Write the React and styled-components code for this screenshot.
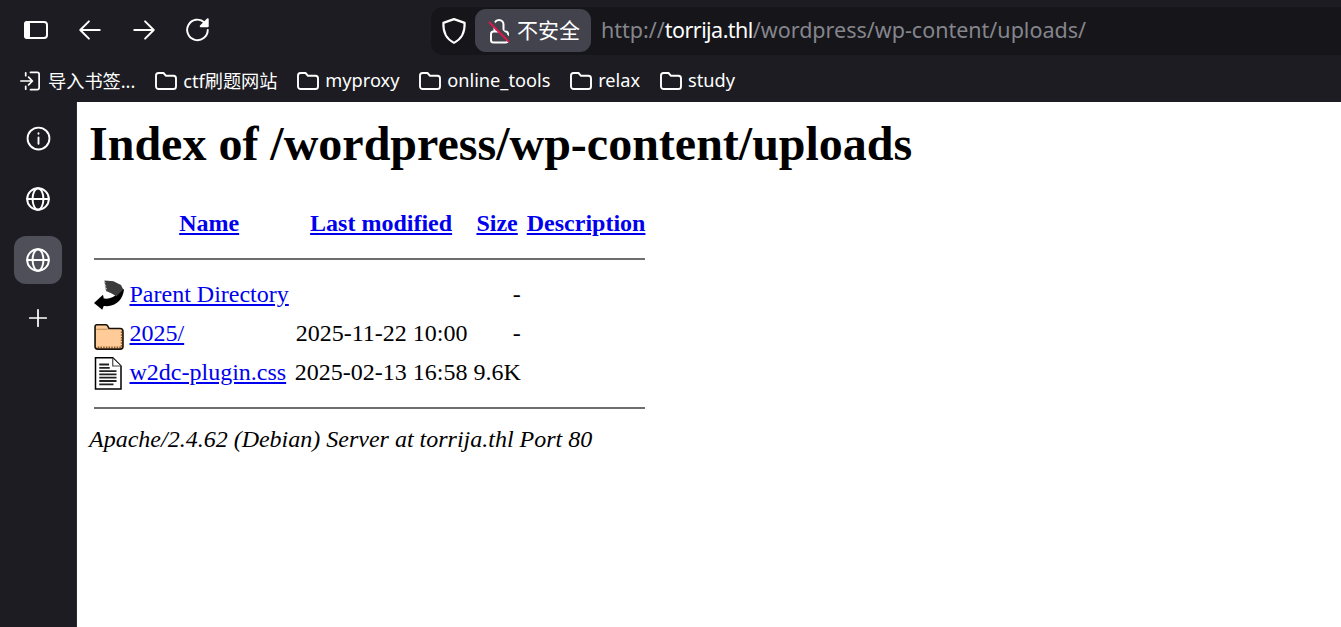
import React from "react";
import styled, { createGlobalStyle } from "styled-components";

const Global = createGlobalStyle`
  html, body { margin: 0; padding: 0; height: 100%; overflow: hidden; }
  #root { height: 100%; }
`;

const Shell = styled.div`
  display: flex;
  flex-direction: column;
  width: 1341px;
  height: 627px;
  background: #1c1c22;
  overflow: hidden;
`;
const Toolbar = styled.div`
  display: flex;
  align-items: center;
  height: 60px;
  flex: none;
`;
const NavGroup = styled.div`
  display: flex;
  align-items: center;
  width: 431px;
  padding-left: 18px;
  gap: 18px;
  box-sizing: border-box;
`;
const NavButton = styled.span`
  display: flex;
  width: 36px;
  height: 36px;
  align-items: center;
  justify-content: center;
  color: #fff;
`;
const AddressBar = styled.div`
  display: flex;
  align-items: center;
  flex: 1;
  height: 48px;
  margin-top: 1px;
  padding-left: 8px;
  background: #15151a;
  border-radius: 12px 0 0 12px;
  font: 21.5px "Noto Sans", "Open Sans", sans-serif;
`;
const Shield = styled.span`
  display: flex;
  width: 30px;
  color: #fff;
`;
const Security = styled.span`
  display: flex;
  align-items: center;
  height: 43px;
  margin-left: 6px;
  padding: 0 11px 0 13px;
  gap: 5px;
  background: #43434e;
  border-radius: 11px;
  color: #fff;
  font: 21px/40px "Noto Sans CJK SC", sans-serif;
`;
const SecurityLabel = styled.span`
  margin-top: -4px;
`;
const Url = styled.span`
  margin-left: 10px;
  margin-top: -3px;
  color: #85858c;
`;
const Host = styled.span`
  color: #fff;
  letter-spacing: -0.55px;
`;
const Bookmarks = styled.div`
  display: flex;
  align-items: center;
  height: 42px;
  padding-left: 19px;
  flex: none;
  font: 18.2px "Noto Sans", "Noto Sans CJK SC", sans-serif;
  color: #fff;
`;
const Bookmark = styled.span`
  display: flex;
  align-items: center;
  gap: 6px;
  margin-right: 19.8px;
  white-space: nowrap;
`;
const BookmarkLabel = styled.span`
  margin-top: -2px;
`;
const Main = styled.div`
  display: flex;
  flex: 1;
  min-height: 0;
`;
const Sidebar = styled.nav`
  display: flex;
  flex-direction: column;
  align-items: center;
  width: 76px;
  flex: none;
  padding-top: 12px;
  gap: 13px;
  border-right: 1px solid #2b2b31;
`;
const SideButton = styled.span`
  display: flex;
  align-items: center;
  justify-content: center;
  width: 48px;
  height: ${(p) => (p.$short ? "42px" : "48px")};
  color: #fff;
  border-radius: 12px;
  background: ${(p) => (p.$active ? "#4f4f5a" : "transparent")};
`;
const Page = styled.main`
  flex: 1;
  background: #fff;
  color: #000;
  padding: 12px;
  font: 24px/1.15 "Liberation Serif", "Times New Roman", serif;
`;
const Title = styled.h1`
  margin: 2px 0 32px;
  font-size: 48px;
  font-weight: bold;
  line-height: 55px;
`;
const Table = styled.table`
  border-spacing: 3px;
  border-collapse: separate;
`;
const Link = styled.a`
  color: #0000ee;
  text-decoration: underline;
`;
const Head = styled.th`
  padding: 1.5px;
  font-weight: bold;
  text-align: center;
  vertical-align: middle;
`;
const Spacer = styled.span`
  display: block;
  width: 30px;
  height: 33px;
`;
const Cell = styled.td`
  padding: 1.5px;
  vertical-align: middle;
  text-align: ${(p) => p.$align || "left"};
  white-space: nowrap;
`;
const IconCell = styled.td`
  padding: 1.5px;
  vertical-align: top;
  line-height: 0;
`;
const Rule = styled.hr`
  margin: 11px auto 13px;
  border: none;
  border-top: 2px solid #6e6e6e;
`;
const RuleCell = styled.th`
  padding: 1.5px;
`;
const Footer = styled.address`
  margin: 0;
  font-style: italic;
`;

const stroke = { fill: "none", stroke: "currentColor", strokeLinecap: "round", strokeLinejoin: "round" };

const FolderIcon = () => (
  <svg width="22" height="18" viewBox="0 0 22 18" {...stroke} strokeWidth="1.900">
    <path d="M3.500 1h5l2.500 2.800h7.500a2.600 2.600 0 0 1 2.500 2.600v8a2.600 2.600 0 0 1-2.600 2.600H3.600A2.600 2.600 0 0 1 1 14.400V3.600A2.600 2.600 0 0 1 3.500 1z" />
  </svg>
);
const GlobeIcon = () => (
  <svg width="26" height="26" viewBox="0 0 24 24" {...stroke} strokeWidth="1.800">
    <circle cx="12" cy="12" r="10" />
    <ellipse cx="12" cy="12" rx="5" ry="10" />
    <path d="M2 12h20" />
  </svg>
);
const ApacheBack = () => (
  <svg width="30" height="33" viewBox="0 0 20 22" style={{ display: "block" }}>
    <path d="M0 16 L6 10.500 L6.500 13 C11 13.500 15 12 18 6 L20 7 C19.500 13 15 19 6.500 18 L5.500 20.500 Z" fill="#000" />
    <path d="M7 1 L13 1.500 L18 4 L19.500 7 L15 11.500 L11.500 9.500 L8 8 Z" fill="#3c3c3c" />
    <path d="M7 2 L8.500 8" stroke="#bbb" strokeWidth="1" strokeDasharray="1 1" fill="none" />
  </svg>
);
const ApacheFolder = () => (
  <svg width="30" height="33" viewBox="0 0 20 22" style={{ display: "block" }}>
    <path d="M0.700 6 Q0.700 4.500 2 4.500 L8 4.500 Q9 4.500 10 7 L17.500 7 Q19.300 7 19.300 9 L19.300 19 Q19.300 20.700 17.500 20.700 L2.500 20.700 Q0.700 20.700 0.700 19 Z" fill="#ffcc99" stroke="#1a1208" strokeWidth="1.100" />
    <path d="M1.500 7.500 H9" stroke="#b98a5a" strokeWidth="0.700" fill="none" />
    <path d="M18.300 9 V19 M2.500 19.500 H18" stroke="#8a5a2a" strokeWidth="0.900" strokeDasharray="1 0.800" fill="none" />
  </svg>
);
const ApacheText = () => (
  <svg width="30" height="33" viewBox="0 0 20 22" style={{ display: "block" }}>
    <path d="M1 0.500 H12.500 L18 6 V21.300 H1 Z" fill="#fff" stroke="#000" strokeWidth="1" />
    <path d="M12.500 0.800 V6 H17.800" fill="#fff" stroke="#444" strokeWidth="0.800" />
    <path d="M3.500 5 H10 M3.500 7.200 H10.500 M3.500 9.400 H15 M3.500 11.600 H15 M3.500 13.800 H15 M3.500 16 H15 M3.500 18.200 H13" stroke="#222" strokeWidth="1.200" />
  </svg>
);

const bookmarks = ["ctf刷题网站", "myproxy", "online_tools", "relax", "study"];

const Rows = [
  { icon: <ApacheBack />, name: "Parent Directory", date: "", size: "-" },
  { icon: <ApacheFolder />, name: "2025/", date: "2025-11-22 10:00", size: "-" },
  { icon: <ApacheText />, name: "w2dc-plugin.css", date: "2025-02-13 16:58", size: "9.6K" },
];

export default function App() {
  return (
    <Shell>
      <Global />
      <Toolbar>
        <NavGroup>
          <NavButton>
            <svg width="26" height="26" viewBox="0 0 26 26" fill="none" stroke="currentColor">
              <rect x="2" y="5" width="22" height="16" rx="3" strokeWidth="2" />
              <rect x="1" y="4" width="6" height="18" rx="3" fill="currentColor" stroke="none" />
            </svg>
          </NavButton>
          <NavButton>
            <svg width="26" height="26" viewBox="0 0 24 24" {...stroke} strokeWidth="1.800">
              <path d="M21 12H3M11 4l-8 8 8 8" />
            </svg>
          </NavButton>
          <NavButton>
            <svg width="26" height="26" viewBox="0 0 24 24" {...stroke} strokeWidth="1.800">
              <path d="M3 12h18M13 4l8 8-8 8" />
            </svg>
          </NavButton>
          <NavButton>
            <svg width="26" height="26" viewBox="0 0 24 24" {...stroke} strokeWidth="1.800">
              <path d="M21 12a9.500 9.500 0 1 1-3-7" />
              <path d="M21 2v6.500H14.500z" fill="currentColor" />
            </svg>
          </NavButton>
        </NavGroup>
        <AddressBar>
          <Shield>
            <svg width="30" height="30" viewBox="0 0 24 24" {...stroke} strokeWidth="1.700">
              <path d="M12 2.500 L20.500 5.500 C20.800 13 18 18.500 12 21.500 C6 18.500 3.200 13 3.500 5.500 Z" />
            </svg>
          </Shield>
          <Security>
            <svg width="24" height="26" viewBox="0 0 24 26" fill="none">
              <path d="M6.500 13V6.500a4.500 4.500 0 0 1 9 0V13" stroke="#fff" strokeWidth="2" />
              <rect x="3" y="13.500" width="17" height="11" rx="2.500" stroke="#fff" strokeWidth="2" />
              <path d="M1 1.500 L22 22" stroke="#43434e" strokeWidth="4" />
              <path d="M1 4 L21 24" stroke="#d81b4a" strokeWidth="2" />
            </svg>
            <SecurityLabel>不安全</SecurityLabel>
          </Security>
          <Url>
            http://<Host>torrija.thl</Host>/wordpress/wp-content/uploads/
          </Url>
        </AddressBar>
      </Toolbar>
      <Bookmarks>
        <Bookmark>
          <svg width="23" height="24" viewBox="0 0 24 24" {...stroke} strokeWidth="1.800">
            <path d="M12 3h7a2 2 0 0 1 2 2v14a2 2 0 0 1-2 2h-7M2 12h12M10 8l4 4-4 4M7 3.500v3M7 17.500v3" />
          </svg>
          <BookmarkLabel>导入书签...</BookmarkLabel>
        </Bookmark>
        {bookmarks.map((b) => (
          <Bookmark key={b}>
            <FolderIcon />
            <BookmarkLabel>{b}</BookmarkLabel>
          </Bookmark>
        ))}
      </Bookmarks>
      <Main>
        <Sidebar>
          <SideButton>
            <svg width="25" height="25" viewBox="0 0 24 24" {...stroke} strokeWidth="1.800">
              <circle cx="12" cy="12" r="10.500" />
              <path d="M12 11v6M12 7v.5" />
            </svg>
          </SideButton>
          <SideButton>
            <GlobeIcon />
          </SideButton>
          <SideButton $active>
            <GlobeIcon />
          </SideButton>
          <SideButton $short>
            <svg width="22" height="22" viewBox="0 0 24 24" {...stroke} strokeWidth="1.900">
              <path d="M12 3v18M3 12h18" />
            </svg>
          </SideButton>
        </Sidebar>
        <Page>
          <Title>Index of /wordpress/wp-content/uploads</Title>
          <Table>
            <thead>
              <tr>
                <Head><Spacer /></Head>
                <Head><Link href="#">Name</Link></Head>
                <Head><Link href="#">Last modified</Link></Head>
                <Head><Link href="#">Size</Link></Head>
                <Head><Link href="#">Description</Link></Head>
              </tr>
              <tr>
                <RuleCell colSpan={5}><Rule /></RuleCell>
              </tr>
            </thead>
            <tbody>
              {Rows.map((r) => (
                <tr key={r.name}>
                  <IconCell>{r.icon}</IconCell>
                  <Cell><Link href="#">{r.name}</Link></Cell>
                  <Cell $align="right">{r.date}</Cell>
                  <Cell $align="right">{r.size}</Cell>
                  <Cell />
                </tr>
              ))}
              <tr>
                <RuleCell colSpan={5}><Rule /></RuleCell>
              </tr>
            </tbody>
          </Table>
          <Footer>Apache/2.4.62 (Debian) Server at torrija.thl Port 80</Footer>
        </Page>
      </Main>
    </Shell>
  );
}
